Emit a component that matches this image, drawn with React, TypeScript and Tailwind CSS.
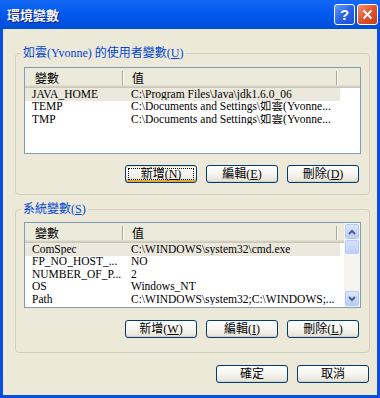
import React from "react";

type Row = [string, string];

const userRows: Row[] = [
  ["JAVA_HOME", "C:\\Program Files\\Java\\jdk1.6.0_06"],
  ["TEMP", "C:\\Documents and Settings\\如雲(Yvonne..."],
  ["TMP", "C:\\Documents and Settings\\如雲(Yvonne..."],
];

const sysRows: Row[] = [
  ["ComSpec", "C:\\WINDOWS\\system32\\cmd.exe"],
  ["FP_NO_HOST_...", "NO"],
  ["NUMBER_OF_P...", "2"],
  ["OS", "Windows_NT"],
  ["Path", "C:\\WINDOWS\\system32;C:\\WINDOWS;..."],
];

function XpButton({
  text,
  hot,
  focused,
}: {
  text: string;
  hot?: string;
  focused?: boolean;
}) {
  return (
    <button
      className={`relative flex h-[18px] w-[72px] items-center justify-center rounded-[3px] border border-[#003c74] bg-linear-to-b from-white via-[#f6f5f0] to-[#e4e1d5] text-[12px] leading-none text-black ${
        focused
          ? "shadow-[inset_0_-2px_0_#e8a93c,inset_0_1px_0_#ffe4a6]"
          : "shadow-[inset_0_-1px_0_#d6d0c5]"
      }`}
    >
      {focused && (
        <span className="absolute inset-[2px] border border-dotted border-black" />
      )}
      <span className="font-['Liberation_Serif','Noto_Sans_CJK_TC',serif]">
        {text}
        {hot && (
          <>
            (<span className="underline">{hot}</span>)
          </>
        )}
      </span>
    </button>
  );
}

function Divider() {
  return (
    <span className="h-[14px] w-[2px] shrink-0 border-l border-[#aca899] border-r border-r-white" />
  );
}

function Chevron({ up }: { up?: boolean }) {
  return (
    <svg width="8" height="6" viewBox="0 0 8 6">
      <path
        d={up ? "M1 5 L4 2 L7 5" : "M1 1 L4 4 L7 1"}
        fill="none"
        stroke="#4d6185"
        strokeWidth="2"
      />
    </svg>
  );
}

function ScrollBar() {
  return (
    <div className="flex w-[16px] shrink-0 flex-col bg-[#f4f3ee] p-[1px]">
      <div className="flex h-[15px] items-center justify-center rounded-[2px] border border-[#b8cbf3] bg-linear-to-b from-[#dbe6fd] to-[#b9cdf9]">
        <Chevron up />
      </div>
      <div className="mt-[1px] h-[14px] rounded-[2px] border border-[#b8cbf3] bg-linear-to-b from-[#d6e2fd] to-[#bccffa]" />
      <div className="flex-1" />
      <div className="flex h-[15px] items-center justify-center rounded-[2px] border border-[#b8cbf3] bg-linear-to-b from-[#dbe6fd] to-[#b9cdf9]">
        <Chevron />
      </div>
    </div>
  );
}

function VarList({
  rows,
  height,
  scroll,
}: {
  rows: Row[];
  height: string;
  scroll?: boolean;
}) {
  return (
    <div
      className={`flex ${height} overflow-hidden border border-[#7f9db9] bg-white`}
    >
      <div className="flex min-w-0 flex-1 flex-col">
        <div className="flex h-[20px] shrink-0 items-center bg-[#ebeadb] text-[12px] shadow-[inset_0_-1px_0_#cbc7b8,inset_0_-2px_0_#d6d2c2,inset_0_-3px_0_#e2decd]">
          <span className="w-[97px] shrink-0 pl-[10px] font-['Noto_Sans_CJK_TC',sans-serif]">
            變數
          </span>
          <Divider />
          <span className="w-[212px] shrink-0 pl-[8px] font-['Noto_Sans_CJK_TC',sans-serif]">
            值
          </span>
          <Divider />
          <span className="flex-1" />
        </div>
        {rows.map(([name, value], i) => (
          <div
            key={name}
            className={`flex h-[12.5px] w-[315px] shrink-0 items-center whitespace-nowrap text-[11.5px] leading-none text-black font-['Liberation_Serif','Noto_Sans_CJK_TC',serif] ${
              i === 0 ? "bg-[#ebe9de]" : ""
            }`}
          >
            <span className="w-[99px] shrink-0 overflow-hidden pl-[7px]">
              {name}
            </span>
            <span className="min-w-0 flex-1 overflow-hidden pl-[7px]">
              {value}
            </span>
          </div>
        ))}
      </div>
      {scroll && <ScrollBar />}
    </div>
  );
}

function Group({
  title,
  hot,
  children,
  pb,
  pt,
}: {
  title: string;
  hot: string;
  children: React.ReactNode;
  pb: string;
  pt: string;
}) {
  return (
    <fieldset
      className={`rounded-[4px] border border-[#d0d0bf] px-[8px] ${pt} ${pb}`}
    >
      <legend className="ml-[-3px] px-[2px] text-[12px] leading-[16px] text-[#0046d5] font-['Liberation_Serif','Noto_Sans_CJK_TC',serif]">
        {title}(<span className="underline">{hot}</span>)
      </legend>
      {children}
    </fieldset>
  );
}

export default function App() {
  return (
    <div className="flex h-[398px] w-[380px] flex-col select-none">
      <div className="flex h-[29px] shrink-0 items-center bg-linear-to-b from-[#1468f5] via-[#0058ee] to-[#004ed6] pl-[7px] pr-[2px]">
        <span className="flex-1 text-[13px] font-bold text-white [text-shadow:1px_1px_0_#0c1b7a] font-['Noto_Sans_CJK_TC',sans-serif]">
          環境變數
        </span>
        <div className="flex gap-[2px]">
          <div className="flex h-[21px] w-[21px] items-center justify-center rounded-[3px] border border-white bg-linear-to-br from-[#6a9cf8] via-[#2a62e8] to-[#1d4fd6] text-[15px] font-bold leading-none text-white font-['Liberation_Sans',sans-serif]">
            ?
          </div>
          <div className="flex h-[21px] w-[21px] items-center justify-center rounded-[3px] border border-white bg-linear-to-br from-[#f0906c] via-[#e0532e] to-[#c63c16]">
            <svg width="11" height="11" viewBox="0 0 11 11">
              <path
                d="M1.5 1.5 L9.5 9.5 M9.5 1.5 L1.5 9.5"
                stroke="white"
                strokeWidth="2"
              />
            </svg>
          </div>
        </div>
      </div>
      <div className="flex flex-1 flex-col border-x-[3px] border-b-[3px] border-[#0a4ee0] bg-[#ece9d8] pl-[12px] pr-[7px] pt-[16px]">
        <Group title="如雲(Yvonne) 的使用者變數" hot="U" pt="pt-[6px]" pb="pb-[11px]">
          <VarList rows={userRows} height="h-[87px]" />
          <div className="mr-[2px] mt-[11px] flex justify-end gap-[9px]">
            <XpButton text="新增" hot="N" focused />
            <XpButton text="編輯" hot="E" />
            <XpButton text="刪除" hot="D" />
          </div>
        </Group>
        <div className="mt-[6px]">
          <Group title="系統變數" hot="S" pt="pt-[5px]" pb="pb-[14px]">
            <VarList rows={sysRows} height="h-[86px]" scroll />
            <div className="mr-[2px] mt-[12px] flex justify-end gap-[9px]">
              <XpButton text="新增" hot="W" />
              <XpButton text="編輯" hot="I" />
              <XpButton text="刪除" hot="L" />
            </div>
          </Group>
        </div>
        <div className="mr-[1px] mt-[12px] flex justify-end gap-[9px]">
          <XpButton text="確定" />
          <XpButton text="取消" />
        </div>
      </div>
    </div>
  );
}
